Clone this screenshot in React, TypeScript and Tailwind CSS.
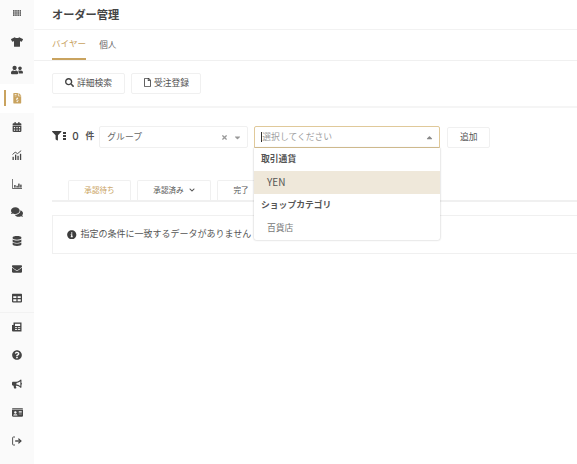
import type { ComponentType } from "react"
import {
  FaTshirt,
  FaUserFriends,
  FaFileInvoiceDollar,
  FaCalendarAlt,
  FaComments,
  FaDatabase,
  FaEnvelope,
  FaTable,
  FaQuestionCircle,
  FaBullhorn,
  FaIdCard,
  FaSearch,
  FaInfoCircle,
  FaChevronDown,
  FaCaretDown,
  FaCaretUp,
  FaTimes,
  FaRegFile,
  FaFilter,
} from "react-icons/fa"

type IconProps = { className?: string }

function AppsIcon({ className }: IconProps) {
  return (
    <svg viewBox="0 0 9 6" fill="currentColor" className={className}>
      {[0, 2.3, 4.6, 6.9].map((x) =>
        [0, 2.2, 4.4].map((y) => <rect key={`${x}-${y}`} x={x} y={y} width="1.7" height="1.6" />),
      )}
    </svg>
  )
}

function AnalyticsIcon({ className }: IconProps) {
  return (
    <svg viewBox="0 0 10 10" fill="currentColor" className={className}>
      <path d="M0.5 4.5 L3.2 2.2 L5.6 3.6 L9.2 0.6" fill="none" stroke="currentColor" strokeWidth="0.9" />
      <rect x="0.5" y="6.8" width="1.3" height="3.2" />
      <rect x="3" y="4.6" width="1.3" height="5.4" />
      <rect x="5.4" y="5.8" width="1.3" height="4.2" />
      <rect x="7.9" y="3.8" width="1.3" height="6.2" />
    </svg>
  )
}

function BarsIcon({ className }: IconProps) {
  return (
    <svg viewBox="0 0 10 10" fill="currentColor" className={className}>
      <path d="M0.4 0 V9.5 H10" fill="none" stroke="currentColor" strokeWidth="0.8" />
      <rect x="2.2" y="6" width="1.4" height="2.6" />
      <rect x="4.4" y="6.8" width="1.4" height="1.8" />
      <rect x="6.2" y="4.6" width="1.4" height="4" />
      <rect x="8.2" y="5.6" width="1.4" height="3" />
    </svg>
  )
}

function NewsIcon({ className }: IconProps) {
  return (
    <svg viewBox="0 0 10 10" className={className}>
      <path d="M1.5 0.5 H9.5 V9.5 H1 A1 1 0 0 1 0 8.5 V3 H1.5 Z" fill="currentColor" />
      <rect x="3" y="1.8" width="5.2" height="2.2" fill="#fafafa" />
      <rect x="3" y="5.2" width="2.2" height="0.9" fill="#fafafa" />
      <rect x="6" y="5.2" width="2.2" height="0.9" fill="#fafafa" />
      <rect x="3" y="7" width="2.2" height="0.9" fill="#fafafa" />
      <rect x="6" y="7" width="2.2" height="0.9" fill="#fafafa" />
    </svg>
  )
}

function LogoutIcon({ className }: IconProps) {
  return (
    <svg viewBox="0 0 10 10" fill="none" stroke="currentColor" className={className}>
      <path d="M3 1 H1.4 A0.8 0.8 0 0 0 0.6 1.8 V8.2 A0.8 0.8 0 0 0 1.4 9 H3" strokeWidth="0.9" />
      <path d="M3.2 5 H8.6" strokeWidth="1.4" />
      <path d="M6.4 2.6 L8.9 5 L6.4 7.4" strokeWidth="1.3" />
    </svg>
  )
}

type NavEntry = { icon: ComponentType<IconProps>; key: string; size: string; active?: boolean }

const topNav: NavEntry[] = [
  { icon: AppsIcon, key: "apps", size: "w-[8.5px] h-[6px]" },
  { icon: FaTshirt, key: "items", size: "w-3 h-3" },
  { icon: FaUserFriends, key: "users", size: "w-3 h-3" },
  { icon: FaFileInvoiceDollar, key: "orders", size: "w-[10.5px] h-[10.5px]", active: true },
  { icon: FaCalendarAlt, key: "calendar", size: "w-[10px] h-[10px]" },
  { icon: AnalyticsIcon, key: "trend", size: "w-[10px] h-[10px]" },
  { icon: BarsIcon, key: "report", size: "w-[10px] h-[10px]" },
  { icon: FaComments, key: "chat", size: "w-3 h-3" },
  { icon: FaDatabase, key: "data", size: "w-[10px] h-[10px]" },
  { icon: FaEnvelope, key: "mail", size: "w-[10px] h-[10px]" },
  { icon: FaTable, key: "table", size: "w-[10px] h-[10px]" },
]

const bottomNav: NavEntry[] = [
  { icon: NewsIcon, key: "news", size: "w-[10px] h-[10px]" },
  { icon: FaQuestionCircle, key: "help", size: "w-[10px] h-[10px]" },
  { icon: FaBullhorn, key: "announce", size: "w-[10px] h-[10px]" },
  { icon: FaIdCard, key: "card", size: "w-[11px] h-[11px]" },
  { icon: LogoutIcon, key: "logout", size: "w-[10px] h-[10px]" },
]

function NavItem({ item }: { item: NavEntry }) {
  const Icon = item.icon
  return (
    <div className={`relative flex h-[28.45px] w-full shrink-0 items-center justify-center ${item.active ? "bg-white text-[#c9a35f]" : "text-[#444444]"}`}>
      {item.active && <div className="absolute left-1 top-[6px] h-4 w-[1.5px] bg-[#c9a35f]" />}
      <Icon className={item.size} />
    </div>
  )
}

export default function App() {
  return (
    <div className="flex h-[464px] w-[577px] overflow-hidden bg-white font-['Noto_Sans_CJK_JP','Noto_Sans',sans-serif] text-[#555555]">
      <nav className="flex w-[34px] shrink-0 flex-col bg-[#fafafa]">
        <div className="-mt-px" />
        {topNav.map((item) => (
          <NavItem key={item.key} item={item} />
        ))}
        <div className="h-px bg-[#f2f2f2]" />
        {bottomNav.map((item) => (
          <NavItem key={item.key} item={item} />
        ))}
      </nav>

      <main className="min-w-0 flex-1">
        <header className="flex h-[30px] items-center border-b border-[#f2f2f2] pb-px pl-[18px]">
          <h1 className="text-[11.2px] font-bold text-[#444444]">オーダー管理</h1>
        </header>

        <div className="flex h-[31px] items-stretch gap-[13px] border-b border-[#f0f0f0] pl-[18px] text-[8.6px]">
          <div className="flex items-center border-b-2 border-[#c9a35f] pb-[2px] text-[#c9a35f]">バイヤー</div>
          <div className="flex items-center pb-[2px] text-[#666666]">個人</div>
        </div>

        <div className="ml-[18px] flex h-[47px] items-center gap-[6px] border-b-2 border-[#f5f5f5] pb-px text-[8.8px]">
          <button className="flex h-[21px] w-[73px] items-center justify-center gap-[3px] rounded-[2px] border border-[#f0f0f0] pb-px text-[#555555]">
            <FaSearch className="h-[9px] w-[9px] text-[#444444]" />
            詳細検索
          </button>
          <button className="flex h-[21px] w-[70px] items-center justify-center gap-[2px] rounded-[2px] border border-[#f0f0f0] pb-px text-[#555555]">
            <FaRegFile className="h-[9px] w-[9px] text-[#444444]" />
            受注登録
          </button>
        </div>

        <div className="relative ml-[18px] mt-[18px] flex h-[22px] items-center text-[8.8px]">
          <div className="flex -translate-y-px items-center">
            <FaFilter className="h-[9.5px] w-[9.5px] text-[#3d3d3d]" />
            <div className="ml-px flex flex-col gap-[1.5px]">
              <span className="h-[1.5px] w-[3px] bg-[#3d3d3d]" />
              <span className="h-[1.5px] w-[3px] bg-[#3d3d3d]" />
              <span className="h-[1.5px] w-[3px] bg-[#3d3d3d]" />
            </div>
          </div>
          <span className="ml-[5px] w-[10px] -translate-y-px text-center font-['Inter',sans-serif] text-[10px] font-medium text-[#444444]">0</span>
          <span className="ml-[5px] -translate-y-px font-bold">件</span>
          <div className="ml-[5px] flex h-[22px] w-[149px] items-center rounded-[2px] border border-[#f0f0f0] pl-[7px] pr-[5px] text-[#666666]">
            <span className="flex-1 pb-px">グループ</span>
            <FaTimes className="h-[7px] w-[7px] text-[#999999]" />
            <FaCaretDown className="ml-[5px] h-[9px] w-[9px] text-[#999999]" />
          </div>
          <div className="ml-[6px] flex h-[22px] w-[186px] items-center rounded-t-[2px] border border-[#e0c99a] pl-[6px] pr-[5px] text-[#a0a0a0]">
            <span className="h-[10px] w-px bg-[#333333]" />
            <span className="flex-1 pb-px">選択してください</span>
            <FaCaretUp className="h-[9px] w-[9px] text-[#888888]" />
          </div>
          <button className="ml-[7px] flex h-[21px] w-[43px] items-center justify-center rounded-[2px] border border-[#f0f0f0] pb-px text-[#555555]">追加</button>

          {/* Open dropdown */}
          <div className="absolute left-[202px] top-[22px] z-10 w-[186px] rounded-b-[2px] bg-white shadow-[0_0_2px_rgba(0,0,0,0.3)]">
            <div className="flex h-[22.5px] items-center pb-px pl-[7px] font-bold">取引通貨</div>
            <div className="flex h-[23px] items-center bg-[#efe8da] pb-px pl-[13px] text-[10px]">YEN</div>
            <div className="flex h-[22.5px] items-center pb-px pl-[7px] font-bold">ショップカテゴリ</div>
            <div className="flex h-[24px] items-center pb-px pl-[13px] text-[#777777]">百貨店</div>
          </div>
        </div>

        <div className="ml-[18px] mt-[33px] flex h-[21px] items-end gap-[6px] border-b-2 border-[#f0f0f0] pl-4 text-[7.6px]">
          <div className="flex h-5 w-[63px] items-center justify-center rounded-t-[2px] border border-b-0 border-[#f0f0f0] pb-[2px] text-[#c9a35f]">承認待ち</div>
          <div className="flex h-5 w-[74px] items-center justify-center gap-[5px] rounded-t-[2px] border border-b-0 border-[#f0f0f0] pb-[2px]">
            承認済み
            <FaChevronDown className="h-[6px] w-[6px]" />
          </div>
          <div className="flex h-5 w-12 items-center justify-center rounded-t-[2px] border border-b-0 border-[#f0f0f0] pb-[2px]">完了</div>
        </div>

        <div className="ml-[18px] mt-[13px] flex h-[39px] items-center gap-1 border border-r-0 border-[#f0f0f0] pl-[14px] text-[9px]">
          <FaInfoCircle className="h-[9.5px] w-[9.5px] text-[#3d3d3d]" />
          <span className="pb-px">指定の条件に一致するデータがありません</span>
        </div>
      </main>
    </div>
  )
}
